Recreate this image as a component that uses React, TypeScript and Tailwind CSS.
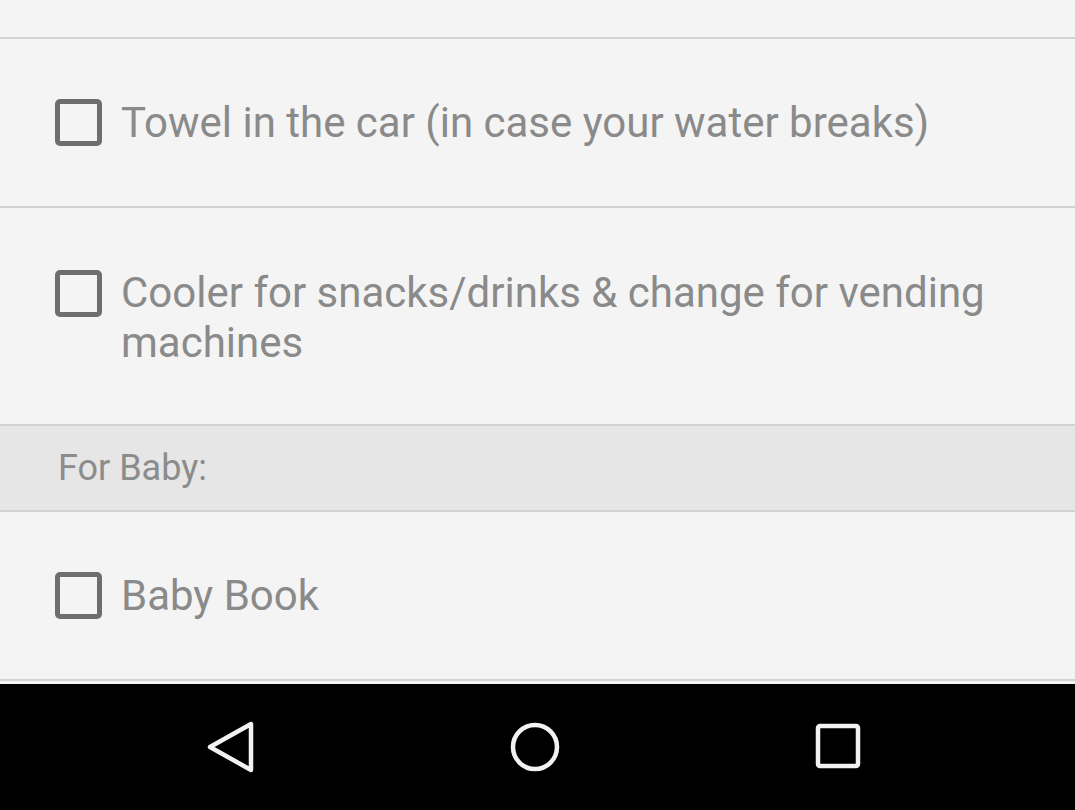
const font = { fontFamily: "Roboto, 'Liberation Sans', sans-serif" };

const CheckRow = ({ text, tall }: { text: string; tall?: boolean }) => {
  return (
    <div
      className={
        tall
          ? "flex items-start h-[218px] pt-[60px] border-b-2 border-[#d2d2d2]"
          : "flex items-center h-[169px] border-b-2 border-[#d2d2d2]"
      }
    >
      <div className={"ml-[55px] w-[47px] h-[47px] shrink-0 rounded-[5px] border-[5px] border-[#6e6e6e]" + (tall ? " mt-[2px]" : "")} />
      <div className="ml-[19px] pr-[40px] text-[42px] leading-[50px] text-[#8a8a8a]">{text}</div>
    </div>
  );
};

const App = () => {
  return (
    <div className="w-[1075px] h-[810px] flex flex-col bg-[#f4f4f4] overflow-hidden" style={font}>
      <div className="h-[39px] shrink-0 border-b-2 border-[#d2d2d2]" />
      <CheckRow text="Towel in the car (in case your water breaks)" />
      <CheckRow text="Cooler for snacks/drinks & change for vending machines" tall />
      <div className="h-[86px] shrink-0 flex items-center bg-[#e6e6e6] border-b-2 border-[#d2d2d2]">
        <span className="ml-[58px] text-[36px] text-[#8c8c8c]">For Baby:</span>
      </div>
      <CheckRow text="Baby Book" />
      <div className="h-[3px] shrink-0" />
      <nav className="flex-1 bg-black flex items-center">
        <svg width="60" height="60" viewBox="0 0 60 60" className="ml-[200px] shrink-0">
          <path d="M10 30 L51 7 L51 53 Z" fill="none" stroke="#f2f2f2" strokeWidth="4.5" strokeLinejoin="round" />
        </svg>
        <svg width="60" height="60" viewBox="0 0 60 60" className="ml-[245px] shrink-0">
          <circle cx="30" cy="30" r="22" fill="none" stroke="#f2f2f2" strokeWidth="4.5" />
        </svg>
        <svg width="60" height="60" viewBox="0 0 60 60" className="ml-[243px] shrink-0">
          <rect x="10" y="9" width="40" height="40" rx="2" fill="none" stroke="#f2f2f2" strokeWidth="4.5" />
        </svg>
      </nav>
    </div>
  );
};

export default App;
